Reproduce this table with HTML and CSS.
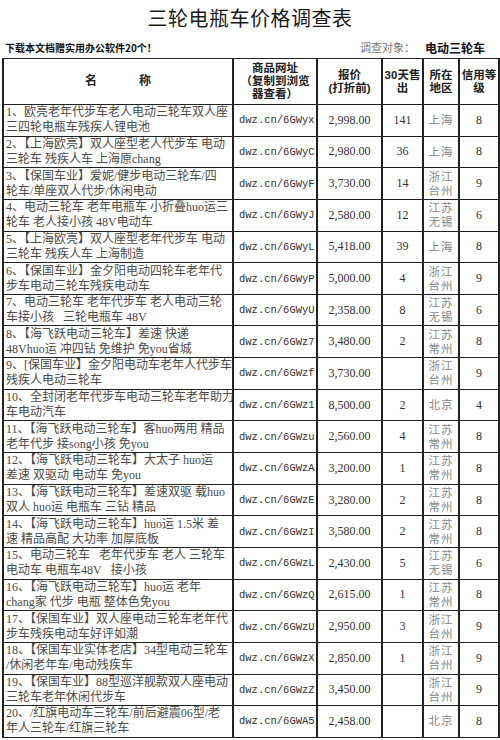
FILE: index.html
```html
<!DOCTYPE html>
<html lang="zh-CN">
<head>
<meta charset="utf-8">
<title>三轮电瓶车价格调查表</title>
<link rel="stylesheet" href="styles.css">
</head>
<body>
<div class="page">
  <h1 class="title">三轮电瓶车价格调查表</h1>
  <div class="info">
    <span class="promo">下载本文档赠实用办公软件20个！</span>
    <span class="target"><span class="target-label">调查对象：</span><b class="target-value">电动三轮车</b></span>
  </div>
  <table class="sheet">
    <colgroup>
      <col class="c-name"><col class="c-url"><col class="c-price"><col class="c-sold"><col class="c-area"><col class="c-credit">
    </colgroup>
    <thead>
      <tr class="head">
        <th class="h-name"><span>名</span><span>称</span></th>
        <th>商品网址<br>（复制到浏览<br>器查看）</th>
        <th>报价<br>(打折前)</th>
        <th>30天售<br>出</th>
        <th>所在<br>地区</th>
        <th>信用等<br>级</th>
      </tr>
    </thead>
    <tbody>
      <tr><td class="name">1、欧亮老年代步车老人电动三轮车双人座<br>三四轮电瓶车残疾人锂电池</td><td class="url">dwz.cn/6GWyx</td><td class="num">2,998.00</td><td class="num">141</td><td class="area">上海</td><td class="num">8</td></tr>
      <tr><td class="name">2、【上海欧亮】双人座型老人代步车 电动<br>三轮车 残疾人车 上海原chang</td><td class="url">dwz.cn/6GWyC</td><td class="num">2,980.00</td><td class="num">36</td><td class="area">上海</td><td class="num">8</td></tr>
      <tr><td class="name">3、【保国车业】爱妮/健步电动三轮车/四<br>轮车/单座双人代步/休闲电动</td><td class="url">dwz.cn/6GWyF</td><td class="num">3,730.00</td><td class="num">14</td><td class="area">浙江<br>台州</td><td class="num">9</td></tr>
      <tr><td class="name">4、电动三轮车 老年电瓶车 小折叠huo运三<br>轮车 老人接小孩 48V电动车</td><td class="url">dwz.cn/6GWyJ</td><td class="num">2,580.00</td><td class="num">12</td><td class="area">江苏<br>无锡</td><td class="num">6</td></tr>
      <tr><td class="name">5、【上海欧亮】双人座型老年代步车 电动<br>三轮车 残疾人车 上海制造</td><td class="url">dwz.cn/6GWyL</td><td class="num">5,418.00</td><td class="num">39</td><td class="area">上海</td><td class="num">8</td></tr>
      <tr><td class="name">6、【保国车业】金夕阳电动四轮车老年代<br>步车电动三轮车残疾电动车</td><td class="url">dwz.cn/6GWyP</td><td class="num">5,000.00</td><td class="num">4</td><td class="area">浙江<br>台州</td><td class="num">9</td></tr>
      <tr><td class="name">7、电动三轮车 老年代步车 老人电动三轮<br>车接小孩&nbsp;&nbsp; 三轮电瓶车 48V</td><td class="url">dwz.cn/6GWyU</td><td class="num">2,358.00</td><td class="num">8</td><td class="area">江苏<br>无锡</td><td class="num">6</td></tr>
      <tr><td class="name">8、【海飞跃电动三轮车】差速 快递<br>48Vhuo运 冲四钻 免维护 免you省城</td><td class="url">dwz.cn/6GWz7</td><td class="num">3,480.00</td><td class="num">2</td><td class="area">江苏<br>常州</td><td class="num">8</td></tr>
      <tr><td class="name">9、[保国车业】金夕阳电动车老年人代步车<br>残疾人电动三轮车</td><td class="url">dwz.cn/6GWzf</td><td class="num">3,730.00</td><td class="num"></td><td class="area">浙江<br>台州</td><td class="num">9</td></tr>
      <tr><td class="name">10、全封闭老年代步车电动三轮车老年助力<br>车电动汽车</td><td class="url">dwz.cn/6GWz1</td><td class="num">8,500.00</td><td class="num">2</td><td class="area">北京</td><td class="num">4</td></tr>
      <tr><td class="name">11、【海飞跃电动三轮车】客huo两用 精品<br>老年代步 接song小孩 免you</td><td class="url">dwz.cn/6GWzu</td><td class="num">2,560.00</td><td class="num">4</td><td class="area">江苏<br>常州</td><td class="num">8</td></tr>
      <tr><td class="name">12、【海飞跃电动三轮车】大太子 huo运<br>差速 双驱动 电动车 免you</td><td class="url">dwz.cn/6GWzA</td><td class="num">3,200.00</td><td class="num">1</td><td class="area">江苏<br>常州</td><td class="num">8</td></tr>
      <tr><td class="name">13、【海飞跃电动三轮车】差速双驱 载huo<br>双人 huo运 电瓶车 三钻 精品</td><td class="url">dwz.cn/6GWzE</td><td class="num">3,280.00</td><td class="num">2</td><td class="area">江苏<br>常州</td><td class="num">8</td></tr>
      <tr><td class="name">14、【海飞跃电动三轮车】huo运 1.5米 差<br>速 精品高配 大功率 加厚底板</td><td class="url">dwz.cn/6GWzI</td><td class="num">3,580.00</td><td class="num">2</td><td class="area">江苏<br>常州</td><td class="num">8</td></tr>
      <tr><td class="name">15、电动三轮车&nbsp;&nbsp; 老年代步车 老人 三轮车<br>电动车 电瓶车48V&nbsp;&nbsp; 接小孩</td><td class="url">dwz.cn/6GWzL</td><td class="num">2,430.00</td><td class="num">5</td><td class="area">江苏<br>无锡</td><td class="num">6</td></tr>
      <tr><td class="name">16、【海飞跃电动三轮车】huo运 老年<br>chang家 代步 电瓶 整体色免you</td><td class="url">dwz.cn/6GWzQ</td><td class="num">2,615.00</td><td class="num">1</td><td class="area">江苏<br>常州</td><td class="num">8</td></tr>
      <tr><td class="name">17、【保国车业】双人座电动三轮车老年代<br>步车残疾电动车好评如潮</td><td class="url">dwz.cn/6GWzU</td><td class="num">2,950.00</td><td class="num">3</td><td class="area">浙江<br>台州</td><td class="num">9</td></tr>
      <tr><td class="name">18、【保国车业实体老店】34型电动三轮车<br>/休闲老年车/电动残疾车</td><td class="url">dwz.cn/6GWzX</td><td class="num">2,850.00</td><td class="num">1</td><td class="area">浙江<br>台州</td><td class="num">9</td></tr>
      <tr><td class="name">19、【保国车业】88型巡洋舰款双人座电动<br>三轮车老年休闲代步车</td><td class="url">dwz.cn/6GWzZ</td><td class="num">3,450.00</td><td class="num"></td><td class="area">浙江<br>台州</td><td class="num">9</td></tr>
      <tr><td class="name">20、/红旗电动车三轮车/前后避震06型/老<br>年人三轮车/红旗三轮车</td><td class="url">dwz.cn/6GWA5</td><td class="num">2,458.00</td><td class="num"></td><td class="area">北京</td><td class="num">8</td></tr>
    </tbody>
  </table>
</div>
</body>
</html>
```

FILE: styles.css
```css
* { box-sizing: border-box; }
html, body { margin: 0; padding: 0; background: #fff; }
body {
  width: 500px;
  font-family: "Liberation Serif", "Noto Sans CJK SC", serif;
  color: #333;
}
.page { padding: 0 2px; }
.title {
  margin: 0;
  height: 36px;
  line-height: 36px;
  text-align: center;
  font-family: "Noto Sans CJK SC", sans-serif;
  font-weight: 400;
  font-size: 20px;
  letter-spacing: 0.5px;
  color: #1a1a1a;
}
.info {
  height: 22px;
  display: flex;
  justify-content: space-between;
  align-items: center;
  padding: 0 13px 0 3px;
}
.promo {
  font-family: "Noto Sans CJK SC", sans-serif;
  font-weight: 700;
  font-size: 10px;
  color: #111;
}
.target { display: flex; align-items: center; gap: 10px; }
.target-label {
  font-family: "Noto Sans CJK SC", sans-serif;
  font-size: 11px;
  color: #777;
}
.target-value {
  font-family: "Noto Sans CJK SC", sans-serif;
  font-weight: 700;
  font-size: 12px;
  color: #111;
}
.sheet {
  width: 496px;
  border-collapse: collapse;
  table-layout: fixed;
}
.c-name { width: 230px; }
.c-url { width: 84px; }
.c-price { width: 65px; }
.c-sold { width: 41px; }
.c-area { width: 36px; }
.c-credit { width: 40px; }
.sheet th, .sheet td {
  border-top: 1.5px solid #222;
  border-bottom: 1.5px solid #222;
  border-left: 2px solid #222;
  border-right: 2px solid #222;
  padding: 0;
  vertical-align: middle;
  overflow: hidden;
  white-space: nowrap;
}
.head { height: 46px; }
.head th {
  font-family: "Liberation Sans", "Noto Sans CJK SC", sans-serif;
  font-weight: 700;
  font-size: 11.5px;
  line-height: 13px;
  color: #222;
  text-align: center;
}
.h-name span { display: inline-block; margin: 0 21px; font-size: 12px; }
tbody tr { height: 31.65px; }
.name {
  padding-left: 2px !important;
  font-size: 12px;
  line-height: 15px;
  color: #4a4a4a;
}
.url {
  font-family: "Liberation Mono", monospace;
  font-size: 10.5px;
  color: #333;
  padding-left: 5px !important;
}
.num {
  text-align: center;
  font-size: 12px;
  color: #333;
}
.area {
  text-align: center;
  font-family: "Liberation Serif", "Noto Sans CJK SC", serif;
  font-size: 11.5px;
  line-height: 14px;
  letter-spacing: 1px;
  color: #888;
}
```
